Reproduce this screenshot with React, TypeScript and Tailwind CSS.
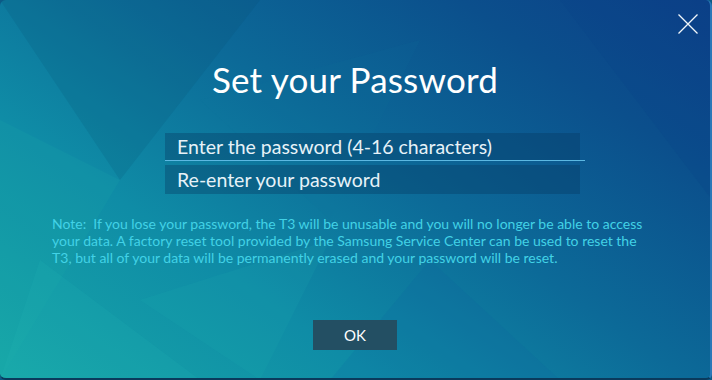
export default function App() {
  return (
    <div className="w-[712px] h-[380px] overflow-hidden bg-[#0c5a86]">
      <div
        className="relative w-full h-full overflow-hidden rounded-[6px] border-r-2 border-b-2 border-r-[#2a78b8] border-b-[#0a3a5c] bg-[linear-gradient(35deg,#17a7a8_0%,#0f8ca6_30%,#0c6a98_55%,#0b4f8c_80%,#0c3f88_100%)]"
        style={{ fontFamily: 'Lato, "Open Sans", sans-serif' }}
      >
        {/* faint triangle texture */}
        <svg className="absolute inset-0 pointer-events-none" width="712" height="380" viewBox="0 0 712 380">
          <polygon points="0,0 260,0 120,180" fill="#0a4a6a" opacity="0.15" />
          <polygon points="120,180 0,120 0,380" fill="#1fb2b0" opacity="0.12" />
          <polygon points="140,300 330,240 260,380" fill="#22b8b6" opacity="0.12" />
          <polygon points="200,100 420,40 330,220" fill="#0f7aa0" opacity="0.1" />
          <polygon points="430,260 560,380 330,380" fill="#0c5f9e" opacity="0.15" />
          <polygon points="560,0 712,0 712,200" fill="#0a3f86" opacity="0.2" />
          <polygon points="40,260 200,380 0,380" fill="#2bc0ba" opacity="0.12" />
        </svg>

        <button className="absolute top-[14px] left-[678px] w-[20px] h-[20px]">
          <svg width="20" height="20" viewBox="0 0 20 20">
            <path d="M0.5 0.5 L19.5 19.5 M19.5 0.5 L0.5 19.5" stroke="#f2f7fb" strokeWidth="1.3" fill="none" />
          </svg>
        </button>

        <div className="relative flex flex-col items-center">
          <h1 className="mt-[57px] text-[35px] leading-[44px] text-white font-normal tracking-[0.2px]">
            Set your Password
          </h1>

          <div className="mt-[32px] self-start ml-[165px] w-[420px] flex flex-col">
            <div className="w-[415px] h-[27px] bg-[#07365e]/35 pl-[12px] flex items-center text-[19.5px] text-[#e6f2f8]">
              Enter the password (4-16 characters)
            </div>
            <div className="h-px bg-[#5cb8e2] w-[420px]" />
            <div className="w-[415px] mt-[4px] h-[29px] bg-[#07365e]/35 pl-[12px] flex items-center text-[19.5px] text-[#e6f2f8]">
              Re-enter your password
            </div>
          </div>

          <p className="mt-[21px] self-start ml-[52px] whitespace-nowrap text-[14px] leading-[17px] text-[#42d2e6]">
            Note:&nbsp; If you lose your password, the T3 will be unusable and you will no longer be able to access
            <br />
            your data. A factory reset tool provided by the Samsung Service Center can be used to reset the
            <br />
            T3, but all of your data will be permanently erased and your password will be reset.
          </p>

          <button className="mt-[54px] w-[84px] h-[30px] bg-[#234f63] text-white text-[15px] flex items-center justify-center">
            OK
          </button>
        </div>
      </div>
    </div>
  );
}
